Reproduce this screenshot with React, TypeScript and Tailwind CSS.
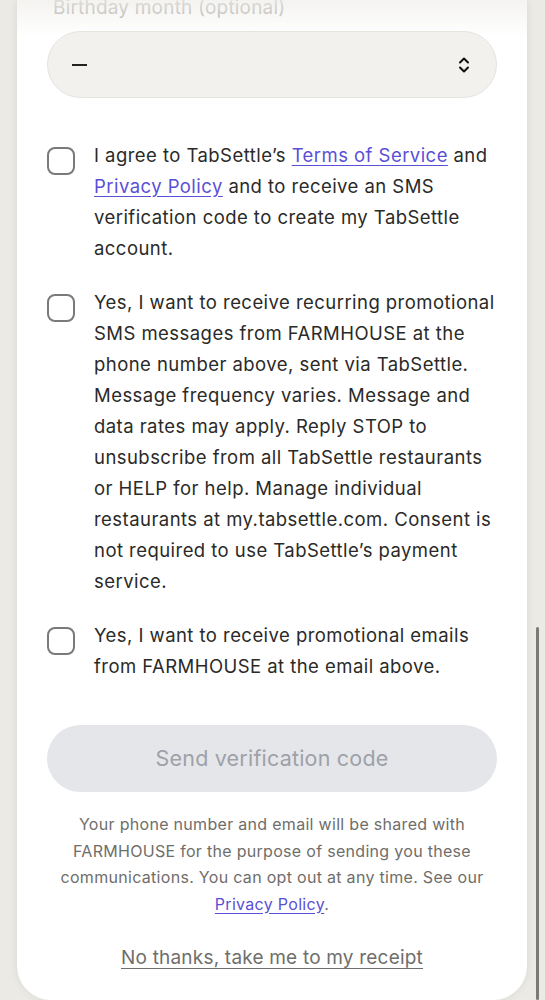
import React from "react";

const font = { fontFamily: "Inter, 'Noto Sans', sans-serif" };

function Box() {
  return (
    <span className="mt-[7px] h-[28px] w-[28px] shrink-0 rounded-[8px] border-2 border-[#7a7a78] bg-white" />
  );
}

function Consent({ children }: { children: React.ReactNode }) {
  return (
    <label className="flex gap-[19px]">
      <Box />
      <span className="whitespace-nowrap text-[18.5px] leading-[31px] tracking-[0.45px] text-[#2a2a28]">{children}</span>
    </label>
  );
}

export default function App() {
  return (
    <div className="min-h-[1000px] bg-[#ebeae5] px-[17px] pr-[18px]" style={font}>
      <div className="relative h-[1000px] overflow-hidden rounded-b-[34px] bg-white px-[30px] shadow-[0_0_10px_rgba(0,0,0,0.08)]">
        <div className="pointer-events-none absolute inset-x-0 top-0 h-[36px] bg-gradient-to-b from-[rgba(240,239,236,0.75)] to-transparent" />
        <p className="-mt-[5px] pl-[6px] text-[19px] leading-[26px] tracking-[0.2px] text-[#a8a7a2]">Birthday month (optional)</p>

        <div className="mt-[10px] flex h-[67px] items-center justify-between rounded-[34px] border border-[#e4e3de] bg-[#f2f1ed] pl-[24px] pr-[26px]">
          <span className="block h-[2px] w-[15px] bg-[#222]" />
          <svg width="12" height="18" viewBox="0 0 12 18" fill="none" stroke="#111" strokeWidth="2" strokeLinecap="round" strokeLinejoin="round">
            <path d="M2 6.5 6 2.5 10 6.5" />
            <path d="M2 11.5 6 15.5 10 11.5" />
          </svg>
        </div>

        <div className="mt-[42px] flex flex-col gap-[23px]">
          <Consent>
            I agree to TabSettle’s{" "}
            <a className="text-[#5a4fd8] underline underline-offset-[3px]">Terms of Service</a> and
            <br />
            <a className="text-[#5a4fd8] underline underline-offset-[3px]">Privacy Policy</a> and to receive an SMS
            <br />
            verification code to create my TabSettle
            <br />
            account.
          </Consent>
          <Consent>
            Yes, I want to receive recurring promotional
            <br />
            SMS messages from FARMHOUSE at the
            <br />
            phone number above, sent via TabSettle.
            <br />
            Message frequency varies. Message and
            <br />
            data rates may apply. Reply STOP to
            <br />
            unsubscribe from all TabSettle restaurants
            <br />
            or HELP for help. Manage individual
            <br />
            restaurants at my.tabsettle.com. Consent is
            <br />
            not required to use TabSettle’s payment
            <br />
            service.
          </Consent>
          <Consent>
            Yes, I want to receive promotional emails
            <br />
            from FARMHOUSE at the email above.
          </Consent>
        </div>

        <button className="mt-[43px] flex h-[67px] w-full items-center justify-center rounded-[34px] bg-[#e5e6ea] text-[21.5px] tracking-[0.2px] text-[#9ea1a8]">
          Send verification code
        </button>

        <p className="mt-[19px] whitespace-nowrap text-center text-[16px] leading-[26.5px] tracking-[0.3px] text-[#6f6e6a]">
          Your phone number and email will be shared with
          <br />
          FARMHOUSE for the purpose of sending you these
          <br />
          communications. You can opt out at any time. See our
          <br />
          <a className="text-[#5a4fd8] underline underline-offset-[3px]">Privacy Policy</a>.
        </p>

        <p className="mt-[28px] text-center text-[19px] leading-[26px] tracking-[0.2px] text-[#6f6e6a] underline underline-offset-[4px]">
          No thanks, take me to my receipt
        </p>
      </div>
      <div className="fixed right-[6px] top-[627px] h-[373px] w-[3px] rounded-full bg-[#7b7a76]" />
    </div>
  );
}
